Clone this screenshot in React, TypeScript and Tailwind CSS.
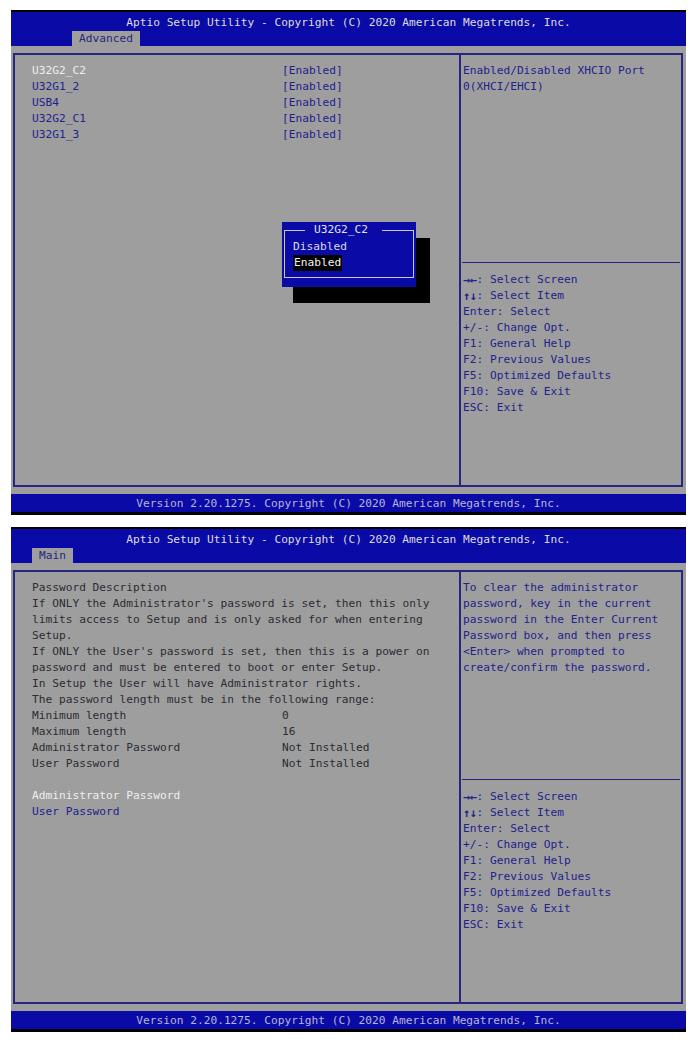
import React from 'react';

const BLUE = 'bg-[#0a0aa6]';

type Row = { label: string; value?: string; tone?: 'white' | 'navy' | 'dark' };

const helpKeys: [string, string][] = [
  ['→←', ': Select Screen'],
  ['↑↓', ': Select Item'],
  ['', 'Enter: Select'],
  ['', '+/-: Change Opt.'],
  ['', 'F1: General Help'],
  ['', 'F2: Previous Values'],
  ['', 'F5: Optimized Defaults'],
  ['', 'F10: Save & Exit'],
  ['', 'ESC: Exit'],
];

const advancedRows: Row[] = [
  { label: 'U32G2_C2', value: '[Enabled]', tone: 'white' },
  { label: 'U32G1_2', value: '[Enabled]', tone: 'navy' },
  { label: 'USB4', value: '[Enabled]', tone: 'navy' },
  { label: 'U32G2_C1', value: '[Enabled]', tone: 'navy' },
  { label: 'U32G1_3', value: '[Enabled]', tone: 'navy' },
];

const mainRows: Row[] = [
  { label: 'Password Description', tone: 'dark' },
  { label: "If ONLY the Administrator's password is set, then this only", tone: 'dark' },
  { label: 'limits access to Setup and is only asked for when entering', tone: 'dark' },
  { label: 'Setup.', tone: 'dark' },
  { label: "If ONLY the User's password is set, then this is a power on", tone: 'dark' },
  { label: 'password and must be entered to boot or enter Setup.', tone: 'dark' },
  { label: 'In Setup the User will have Administrator rights.', tone: 'dark' },
  { label: 'The password length must be in the following range:', tone: 'dark' },
  { label: 'Minimum length', value: '0', tone: 'dark' },
  { label: 'Maximum length', value: '16', tone: 'dark' },
  { label: 'Administrator Password', value: 'Not Installed', tone: 'dark' },
  { label: 'User Password', value: 'Not Installed', tone: 'dark' },
  { label: ' ', tone: 'dark' },
  { label: 'Administrator Password', tone: 'white' },
  { label: 'User Password', tone: 'navy' },
];

const toneClass = {
  white: 'text-[#eeeeee]',
  navy: 'text-[#22228c]',
  dark: 'text-[#2c2c34]',
};

export default function App() {
  return (
    <div className="h-[1045px] w-[696px] bg-white pl-[11px] pt-[10px] font-['DejaVu_Sans_Mono','Liberation_Mono',monospace] text-[11.2px] leading-[16px]">
      <Screen
        tab="Advanced"
        tabClass="ml-[61px]"
        rows={advancedRows}
        help={['Enabled/Disabled XHCIO Port', '0(XHCI/EHCI)']}
        popup
      />
      <div className="h-[12px]" />
      <Screen
        tab="Main"
        tabClass="ml-[21px]"
        rows={mainRows}
        help={[
          'To clear the administrator',
          'password, key in the current',
          'password in the Enter Current',
          'Password box, and then press',
          '<Enter> when prompted to',
          'create/confirm the password.',
        ]}
      />
    </div>
  );
}

function Screen({
  tab,
  tabClass,
  rows,
  help,
  popup,
}: {
  tab: string;
  tabClass: string;
  rows: Row[];
  help: string[];
  popup?: boolean;
}) {
  return (
    <div className="flex w-[675px] flex-col">
      <div className="h-[2px] bg-black" />
      <div className={`flex h-[34px] flex-col ${BLUE}`}>
        <div className="pt-[3px] text-center text-[#dcdcdc] whitespace-pre">
          Aptio Setup Utility - Copyright (C) 2020 American Megatrends, Inc.
        </div>
        <div className="flex">
          <div className={`h-[15px] bg-[#9e9e9e] px-[7px] leading-[15px] text-[#26267e] ${tabClass}`}>{tab}</div>
        </div>
      </div>

      <div className="h-[448px] bg-[#9e9e9e] pl-[2px] pr-[3px] pt-[7px]">
        <div className="relative flex h-[434px] border-2 border-[#262680]">
          <div className="w-[446px] border-r-2 border-[#262680] pl-[17px] pt-[8px]">
            {rows.map((r, i) => (
              <div key={i} className={`flex whitespace-pre ${toneClass[r.tone ?? 'navy']}`}>
                <span className={r.value ? 'w-[250px] shrink-0' : ''}>{r.label}</span>
                {r.value && <span className={popup ? 'text-[#22228c]' : ''}>{r.value}</span>}
              </div>
            ))}
          </div>
          <div className="flex flex-1 flex-col text-[#22228c]">
            <div className="h-[207px] pl-[2px] pt-[8px] whitespace-pre">
              {help.map((h, i) => (
                <div key={i}>{h}</div>
              ))}
            </div>
            <div className="mx-[1px] h-[1px] bg-[#262680]" />
            <div className="pl-[2px] pt-[9px] whitespace-pre">
              {helpKeys.map(([arrow, text], i) => (
                <div key={i} className="flex items-center">
                  {arrow && (
                    <span className="inline-block w-[13.5px] text-[12px] font-bold leading-[16px] tracking-[-0.5px]">
                      {arrow}
                    </span>
                  )}
                  <span>{text}</span>
                </div>
              ))}
            </div>
          </div>

          {popup && <Popup />}
        </div>
      </div>

      <div className={`h-[18px] pt-[1px] text-center leading-[17px] text-[#b6b6d8] ${BLUE}`}>
        Version 2.20.1275. Copyright (C) 2020 American Megatrends, Inc.
      </div>
      <div className="h-[3px] bg-black" />
    </div>
  );
}

function Popup() {
  return (
    <>
      <div className="absolute left-[278px] top-[183px] h-[65px] w-[137px] bg-black" />
      <div className={`absolute left-[267px] top-[167px] h-[65px] w-[134px] ${BLUE}`}>
        <div className="absolute inset-x-[2px] bottom-[9px] top-[8px] border border-[#c8c8d0]" />
        <div className={`absolute left-[23px] top-0 pl-[9px] pr-[14px] text-[#e4e4ec] ${BLUE}`}>U32G2_C2</div>
        <div className="relative flex flex-col items-start pl-[11px] pt-[17px]">
          <div className="text-[#dadae8]">Disabled</div>
          <div className="bg-black px-[1px] text-[#f2f2f2]">Enabled</div>
        </div>
      </div>
    </>
  );
}
